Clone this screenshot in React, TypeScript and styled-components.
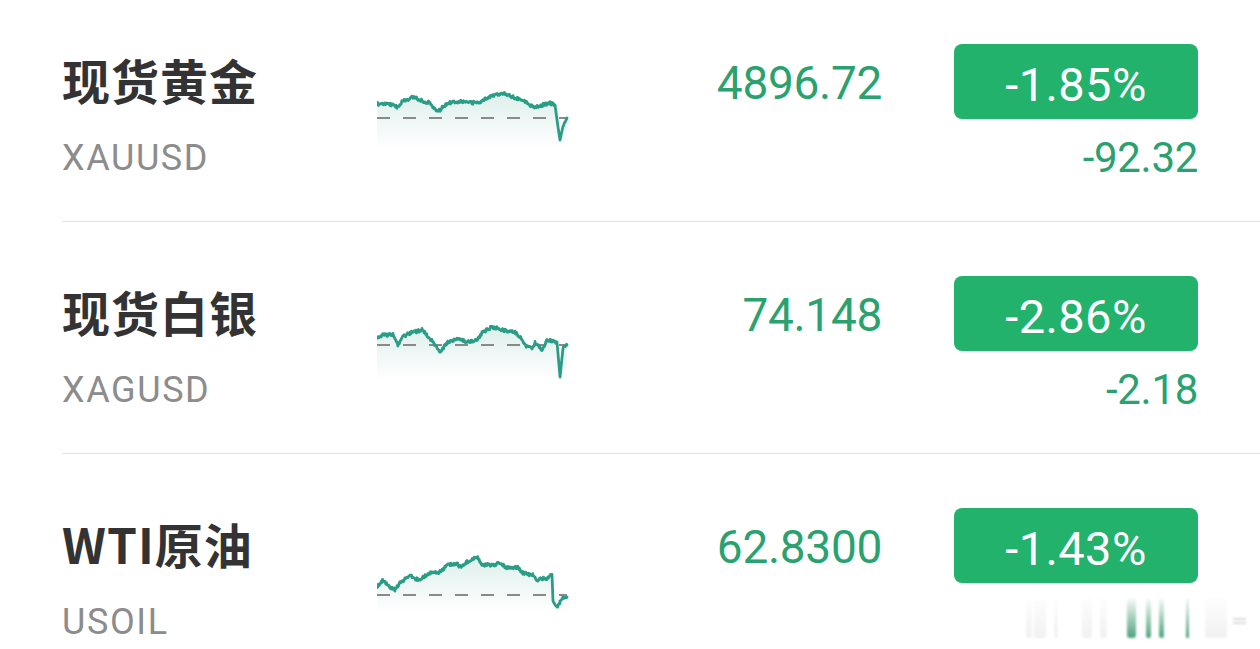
import styled, { createGlobalStyle } from "styled-components";

const GlobalStyle = createGlobalStyle`
  html, body {
    margin: 0;
    padding: 0;
    background: #ffffff;
    overflow: hidden;
  }
  * {
    box-sizing: border-box;
  }
`;

const Page = styled.div`
  position: relative;
  width: 1260px;
  height: 649px;
  overflow: hidden;
  background: #fff;
  font-family: Roboto, "Noto Sans CJK SC", sans-serif;
`;

const List = styled.div`
  margin-top: -10px;
  margin-left: 62px;
`;

const Row = styled.div`
  display: grid;
  grid-template-columns: 315px 196px 1fr 244px;
  height: 232px;
  padding-right: 62px;
  border-bottom: 1px solid #e2e2e2;
`;

const NameCol = styled.div`
  display: flex;
  flex-direction: column;
  padding-top: 61px;
`;

const Name = styled.div`
  font-family: "Noto Sans CJK SC", "Noto Sans", sans-serif;
  font-weight: 700;
  font-size: 48px;
  line-height: 56px;
  color: #333333;
  letter-spacing: 1px;
`;

const Code = styled.div`
  margin-top: 29px;
  font-size: 36px;
  line-height: 44px;
  color: #8c8c8c;
  letter-spacing: 1.6px;
`;

const ChartBox = styled.div`
  padding-top: 100px;
`;

const Price = styled.div`
  padding-top: 65px;
  padding-right: 72px;
  text-align: right;
  font-size: 46px;
  line-height: 56px;
  color: #2aa26f;
  letter-spacing: -0.3px;
`;

const RightCol = styled.div`
  display: flex;
  flex-direction: column;
  align-items: flex-end;
  padding-top: 54px;
`;

const Badge = styled.div`
  width: 244px;
  height: 75px;
  padding-top: 5px;
  border-radius: 8px;
  background: #22b26c;
  color: #ffffff;
  font-size: 47px;
  letter-spacing: 0.4px;
  display: flex;
  align-items: center;
  justify-content: center;
`;

const Change = styled.div`
  margin-top: 17px;
  font-size: 42px;
  line-height: 44px;
  color: #2aa26f;
  letter-spacing: -0.3px;
`;

const Overlay = styled.div`
  position: absolute;
  left: 1026px;
  top: 596px;
  width: 230px;
  height: 42px;
  display: flex;
  align-items: flex-end;
  pointer-events: none;
  filter: blur(1px);
`;

const Bar = styled.div<{ $w: number; $gap: number; $green?: boolean }>`
  width: ${(p) => p.$w}px;
  height: 40px;
  margin-right: ${(p) => p.$gap}px;
  border-radius: 3px;
  background: ${(p) =>
    p.$green
      ? "linear-gradient(to bottom, rgba(34,150,100,0.03), rgba(34,140,95,0.8))"
      : "linear-gradient(to bottom, rgba(210,210,210,0.03), rgba(200,200,200,0.25))"};
`;

const Eq = styled.div`
  margin-left: 6px;
  margin-bottom: 14px;
  width: 13px;
  height: 6px;
  border-top: 2px solid #dcdcdc;
  border-bottom: 2px solid #dcdcdc;
`;

type Pt = [number, number];

function rng(seed: number) {
  let a = seed;
  return () => {
    a |= 0;
    a = (a + 0x6d2b79f5) | 0;
    let t = Math.imul(a ^ (a >>> 15), 1 | a);
    t = (t + Math.imul(t ^ (t >>> 7), 61 | t)) ^ t;
    return ((t ^ (t >>> 14)) >>> 0) / 4294967296;
  };
}

function buildLine(keys: Pt[], seed: number) {
  const rand = rng(seed);
  const pts: Pt[] = [];
  for (let i = 0; i < keys.length - 1; i++) {
    const [x0, y0] = keys[i];
    const [x1, y1] = keys[i + 1];
    const steep = Math.abs(y1 - y0) > (x1 - x0) * 3;
    if (steep) {
      pts.push([x0, y0]);
      continue;
    }
    for (let x = x0; x < x1; x += 0.7) {
      const t = (x - x0) / (x1 - x0);
      const y = y0 + (y1 - y0) * t + (rand() - 0.5) * 3.2;
      pts.push([x, y]);
    }
  }
  pts.push(keys[keys.length - 1]);
  return pts;
}

const H = 58;

const Spark = ({ keys, base, seed }: { keys: Pt[]; base: number; seed: number }) => {
  const pts = buildLine(keys, seed);
  const line = pts.map((p, i) => `${i ? "L" : "M"}${p[0].toFixed(1)} ${p[1].toFixed(1)}`).join(" ");
  const last = pts[pts.length - 1];
  const area = `${line} L${last[0]} ${H} L0 ${H} Z`;
  const id = `g${seed}`;
  return (
    <svg width="196" height={H} viewBox={`0 0 196 ${H}`}>
      <defs>
        <linearGradient id={id} x1="0" y1="0" x2="0" y2="1">
          <stop offset="0" stopColor="#2a9d86" stopOpacity="0.16" />
          <stop offset="1" stopColor="#2a9d86" stopOpacity="0" />
        </linearGradient>
      </defs>
      <path d={area} fill={`url(#${id})`} />
      <line x1="0" y1={base} x2="190" y2={base} stroke="#8a8a8a" strokeWidth="2" strokeDasharray="13 13" />
      <path d={line} fill="none" stroke="#2a9d86" strokeWidth="2.8" strokeLinejoin="round" strokeLinecap="round" />
    </svg>
  );
};

interface Quote {
  name: string;
  code: string;
  price: string;
  pct: string;
  change: string;
  base: number;
  keys: Pt[];
}

const quotes: Quote[] = [
  {
    name: "现货黄金",
    code: "XAUUSD",
    price: "4896.72",
    pct: "-1.85%",
    change: "-92.32",
    base: 28,
    keys: [
      [0, 14], [13, 14], [20, 17], [25, 12], [36, 7], [46, 11], [53, 13], [61, 22], [70, 13],
      [83, 11], [93, 13], [103, 12], [110, 8], [116, 5], [126, 3], [136, 7], [146, 10],
      [156, 17], [166, 15], [173, 13], [178, 15], [181, 37], [183, 50], [186, 37], [190, 28],
    ],
  },
  {
    name: "现货白银",
    code: "XAGUSD",
    price: "74.148",
    pct: "-2.86%",
    change: "-2.18",
    base: 23,
    keys: [
      [0, 16], [6, 13], [16, 13], [21, 23], [25, 15], [33, 11], [45, 8], [50, 13], [56, 20],
      [63, 30], [70, 21], [80, 17], [90, 20], [100, 18], [105, 11], [115, 5], [126, 8],
      [138, 10], [143, 15], [150, 25], [155, 26], [158, 21], [165, 28], [170, 18], [178, 20],
      [180, 20], [183, 55], [186, 25], [190, 23],
    ],
  },
  {
    name: "WTI原油",
    code: "USOIL",
    price: "62.8300",
    pct: "-1.43%",
    change: "",
    base: 41,
    keys: [
      [0, 33], [6, 26], [13, 33], [18, 36], [23, 29], [33, 21], [41, 26], [53, 19], [63, 18],
      [71, 11], [80, 9], [83, 13], [93, 6], [100, 3], [105, 11], [116, 11], [123, 9], [130, 14],
      [140, 13], [146, 19], [156, 21], [160, 26], [170, 24], [175, 21], [176, 46], [180, 54],
      [183, 48], [186, 44], [190, 43],
    ],
  },
];

const App = () => {
  return (
    <>
      <GlobalStyle />
      <Page>
        <List>
          {quotes.map((q, i) => (
            <Row key={q.code}>
              <NameCol>
                <Name>{q.name}</Name>
                <Code>{q.code}</Code>
              </NameCol>
              <ChartBox>
                <Spark keys={q.keys} base={q.base} seed={i + 7} />
              </ChartBox>
              <Price>{q.price}</Price>
              <RightCol>
                <Badge>{q.pct}</Badge>
                {q.change && <Change>{q.change}</Change>}
              </RightCol>
            </Row>
          ))}
        </List>
        <Overlay>
          <Bar $w={6} $gap={2} />
          <Bar $w={12} $gap={8} />
          <Bar $w={4} $gap={24} />
          <Bar $w={10} $gap={8} />
          <Bar $w={7} $gap={20} />
          <Bar $w={9} $gap={10} $green />
          <Bar $w={5} $gap={8} $green />
          <Bar $w={5} $gap={22} $green />
          <Bar $w={3} $gap={16} $green />
          <Bar $w={22} $gap={0} />
          <Eq />
        </Overlay>
      </Page>
    </>
  );
};

export default App;
